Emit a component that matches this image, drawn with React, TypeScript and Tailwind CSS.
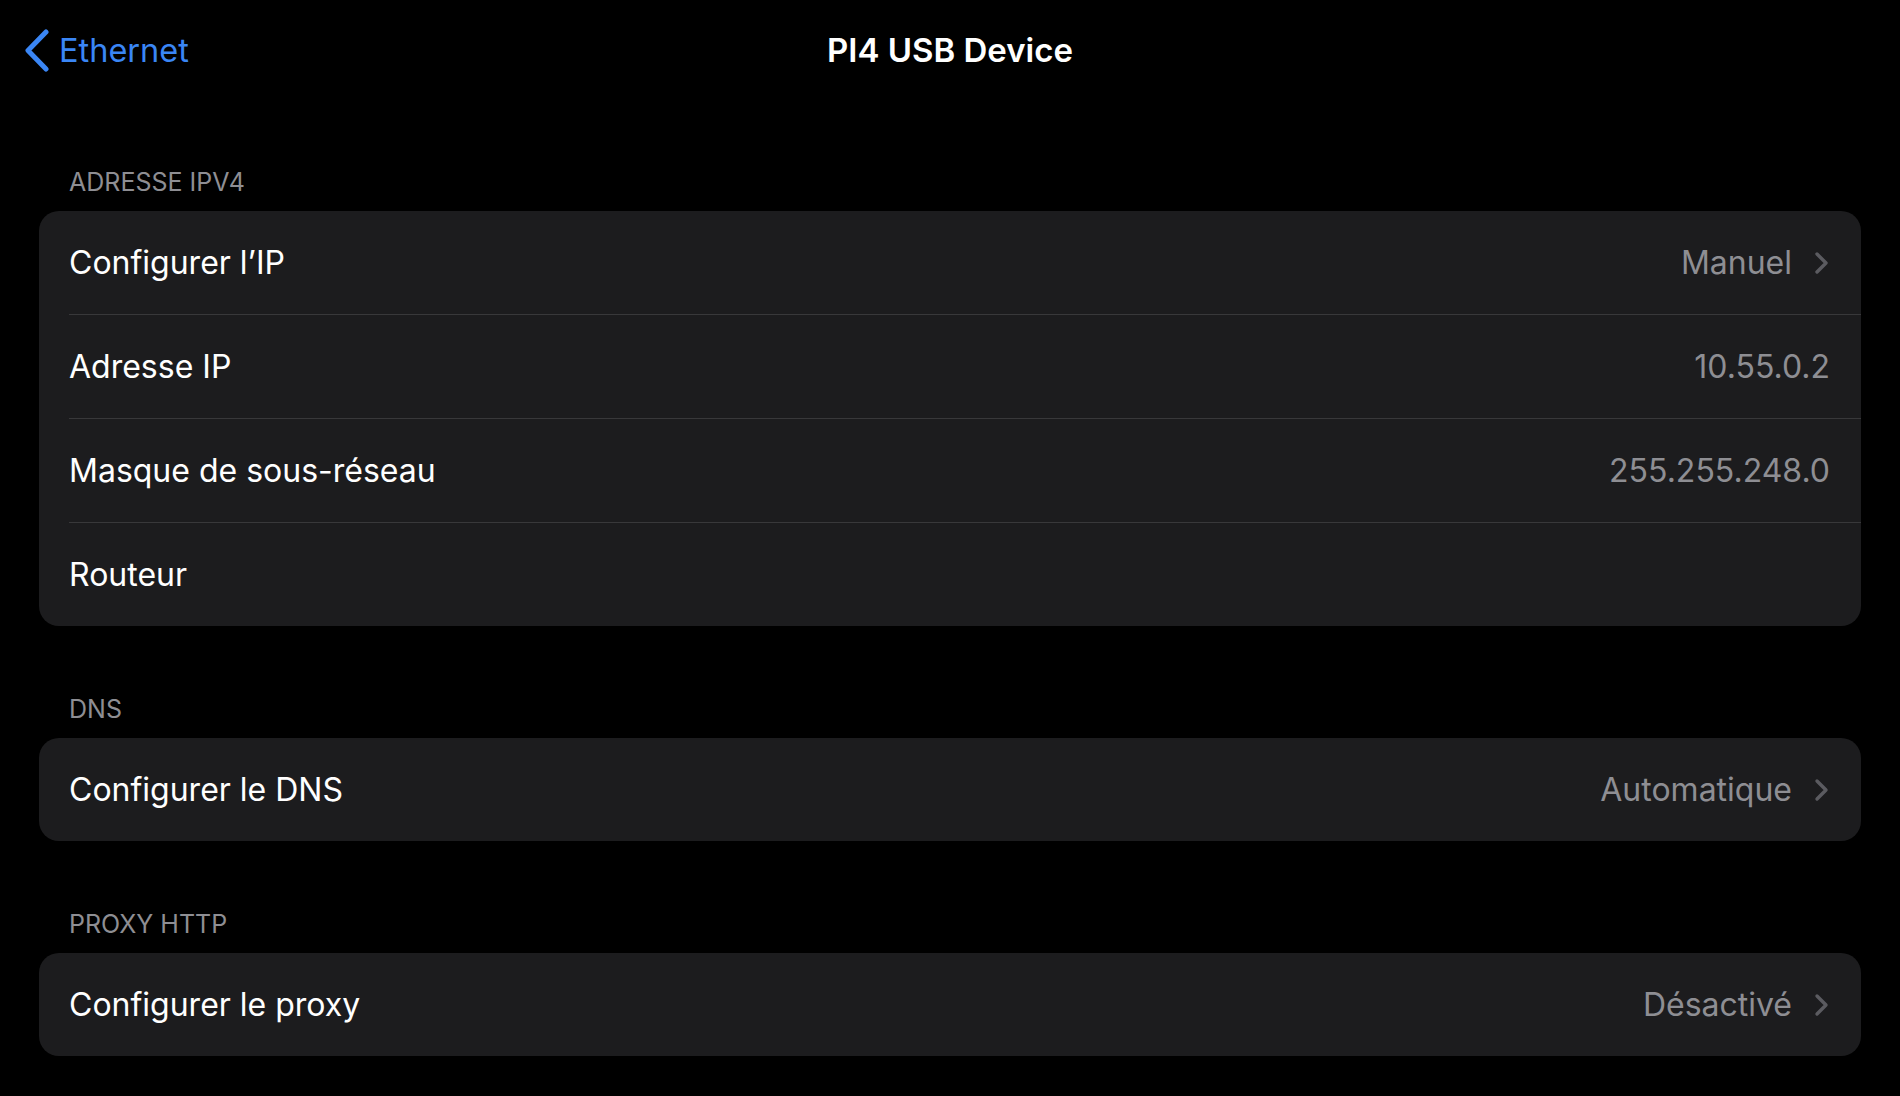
import React from 'react';

type Row = { label: string; value?: string; chevron?: boolean };

const sections: { title: string; rows: Row[] }[] = [
  {
    title: 'ADRESSE IPV4',
    rows: [
      { label: 'Configurer l’IP', value: 'Manuel', chevron: true },
      { label: 'Adresse IP', value: '10.55.0.2' },
      { label: 'Masque de sous-réseau', value: '255.255.248.0' },
      { label: 'Routeur' },
    ],
  },
  {
    title: 'DNS',
    rows: [{ label: 'Configurer le DNS', value: 'Automatique', chevron: true }],
  },
  {
    title: 'PROXY HTTP',
    rows: [{ label: 'Configurer le proxy', value: 'Désactivé', chevron: true }],
  },
];

function Chevron() {
  return (
    <svg width="16" height="24" viewBox="0 0 16 24" fill="none" className="ml-[22px] shrink-0">
      <path d="M3 3l9 9-9 9" stroke="#5b5b60" strokeWidth="3.4" strokeLinecap="round" strokeLinejoin="round" />
    </svg>
  );
}

function SettingsRow({ row, first }: { row: Row; first: boolean }) {
  return (
    <div className="flex pl-[30px]">
      <div
        className={`flex flex-1 items-center justify-between pr-[31px] ${
          first ? 'h-[103px]' : 'h-[104px] border-t border-[#38383a]'
        }`}
      >
        <span className="text-[32px] leading-[40px] text-white">{row.label}</span>
        <div className="flex items-center">
          {row.value && (
            <span className="text-[32px] leading-[40px] text-[#8e8e93]">{row.value}</span>
          )}
          {row.chevron && <Chevron />}
        </div>
      </div>
    </div>
  );
}

export default function App() {
  return (
    <div className="h-[1096px] w-[1900px] overflow-hidden bg-black font-['Inter','Liberation_Sans',sans-serif] antialiased">
      {/* nav bar */}
      <div className="relative flex h-[100px] items-center justify-center">
        <div className="absolute left-[24px] top-[29px] flex items-center">
          <svg width="26" height="43" viewBox="0 0 26 43" fill="none">
            <path d="M22 3L4 21.5 22 40" stroke="#3a86f5" strokeWidth="5" strokeLinecap="round" strokeLinejoin="round" />
          </svg>
          <span className="ml-[9px] text-[32.5px] leading-[40px] text-[#3a86f5]">Ethernet</span>
        </div>
        <h1 className="text-[33px] font-semibold leading-[40px] text-white">PI4 USB Device</h1>
      </div>

      <div className="px-[39px] pt-[67px]">
        {sections.map((s, i) => (
          <div key={s.title} className={i > 0 ? 'mt-[68px]' : ''}>
            <div className="mb-[14px] pl-[30px] text-[25px] leading-[30px] text-[#8e8e93]">{s.title}</div>
            <div className="overflow-hidden rounded-[20px] bg-[#1c1c1e]">
              {s.rows.map((r, j) => (
                <SettingsRow key={r.label} row={r} first={j === 0} />
              ))}
            </div>
          </div>
        ))}
      </div>
    </div>
  );
}
